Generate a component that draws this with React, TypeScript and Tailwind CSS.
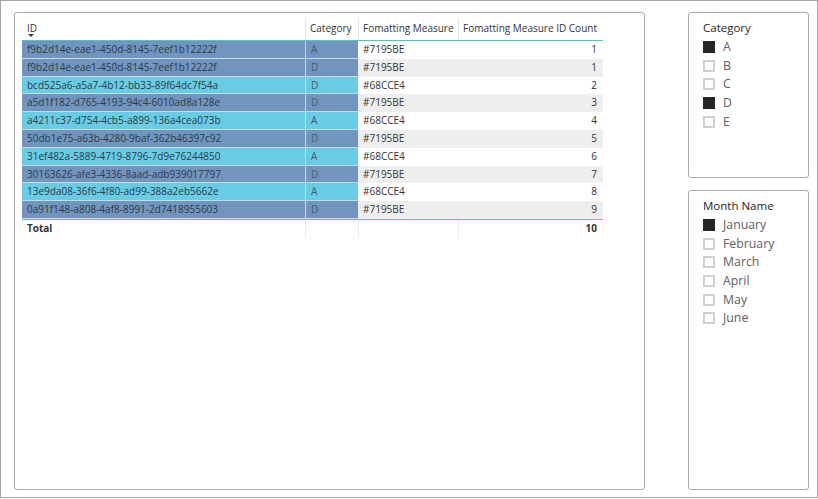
import React from 'react';

const rows = [
  { id: 'f9b2d14e-eae1-450d-8145-7eef1b12222f', cat: 'A', fm: '#7195BE', n: 1 },
  { id: 'f9b2d14e-eae1-450d-8145-7eef1b12222f', cat: 'D', fm: '#7195BE', n: 1 },
  { id: 'bcd525a6-a5a7-4b12-bb33-89f64dc7f54a', cat: 'D', fm: '#68CCE4', n: 2 },
  { id: 'a5d1f182-d765-4193-94c4-6010ad8a128e', cat: 'D', fm: '#7195BE', n: 3 },
  { id: 'a4211c37-d754-4cb5-a899-136a4cea073b', cat: 'A', fm: '#68CCE4', n: 4 },
  { id: '50db1e75-a63b-4280-9baf-362b46397c92', cat: 'D', fm: '#7195BE', n: 5 },
  { id: '31ef482a-5889-4719-8796-7d9e76244850', cat: 'A', fm: '#68CCE4', n: 6 },
  { id: '30163626-afe3-4336-8aad-adb939017797', cat: 'D', fm: '#7195BE', n: 7 },
  { id: '13e9da08-36f6-4f80-ad99-388a2eb5662e', cat: 'A', fm: '#68CCE4', n: 8 },
  { id: '0a91f148-a808-4af8-8991-2d7418955603', cat: 'D', fm: '#7195BE', n: 9 },
];

const font = { fontFamily: '"Open Sans", "Noto Sans", sans-serif' };

const Check = ({ on }: { on: boolean }) =>
  on ? (
    <span className="w-[12px] h-[12px] bg-[#252525] shrink-0" />
  ) : (
    <span className="w-[12px] h-[12px] border-2 border-[#d0d0d0] bg-white shrink-0" />
  );

const Slicer = ({ title, items, selected, h }: { title: string; items: string[]; selected: string[]; h: string }) => (
  <div className={`w-[121px] ${h} border border-[#a8a8a8] rounded-[3px] bg-white pl-[14px] pt-[7px]`}>
    <div className="text-[11.5px] text-[#252423] leading-[16px]">{title}</div>
    <div className="flex flex-col mt-[2px]">
      {items.map((it) => (
        <div key={it} className="flex items-center gap-[8px] h-[18.6px]">
          <Check on={selected.includes(it)} />
          <span className="text-[12.3px] text-[#605e5c] leading-none">{it}</span>
        </div>
      ))}
    </div>
  </div>
);

export default function App() {
  return (
    <div style={font} className="w-[818px] h-[498px] border border-[#a6a6a6] bg-white flex pl-[13px] pt-[11px] gap-[43px]">
      {/* table visual */}
      <div className="w-[631px] h-[478px] border border-[#a8a8a8] rounded-[3px] pl-[7px] pt-[5px]">
        <div className="w-[581px] text-[#333333]">
          <div className="flex h-[23px] border-b border-[#56c2c3] text-[10px]">
            <div className="w-[284px] border-r border-[#e4e4e4] pl-[5px] pt-[3px] leading-[14px] relative">
              ID
              <span className="absolute left-[6px] top-[16px] w-0 h-0 border-l-[3px] border-r-[3px] border-t-[3px] border-l-transparent border-r-transparent border-t-[#333]" />
            </div>
            <div className="w-[53px] border-r border-[#e4e4e4] pl-[4px] pt-[3px] leading-[14px]">Category</div>
            <div className="w-[100px] border-r border-[#e4e4e4] pl-[4px] pt-[3px] leading-[14px] whitespace-nowrap">Fomatting Measure</div>
            <div className="w-[144px] pl-[4px] pt-[3px] leading-[14px] whitespace-nowrap">Fomatting Measure ID Count</div>
          </div>
          {rows.map((r, i) => {
            const bg = r.fm === '#7195BE' ? 'bg-[#7195be]' : 'bg-[#68cce4]';
            const alt = i % 2 === 1 ? 'bg-[#eeeeee]' : 'bg-white';
            return (
              <div key={i} className="flex h-[17.8px] text-[10px] leading-[17px]">
                <div className={`w-[284px] ${bg} border-r border-b border-[#c9dbe6] pl-[5px] text-[#2f3a45] whitespace-nowrap`}>{r.id}</div>
                <div className={`w-[52px] ${bg} border-b border-[#c9dbe6] pl-[5px] text-[#4a5866]`}>{r.cat}</div>
                <div className={`w-[100px] ${alt} pl-[5px]`}>{r.fm}</div>
                <div className={`w-[145px] ${alt} pr-[6px] text-right`}>{r.n}</div>
              </div>
            );
          })}
          <div className="flex h-[19px] border-t border-[#56c2c3] text-[10px] font-bold leading-[17px]">
            <div className="w-[284px] border-r border-[#ececec] pl-[5px]">Total</div>
            <div className="w-[53px] border-r border-[#ececec]" />
            <div className="w-[100px] border-r border-[#ececec]" />
            <div className="w-[144px] pr-[6px] text-right">10</div>
          </div>
        </div>
      </div>
      {/* slicers */}
      <div className="flex flex-col gap-[12px]">
        <Slicer title="Category" items={['A', 'B', 'C', 'D', 'E']} selected={['A', 'D']} h="h-[166px]" />
        <Slicer
          title="Month Name"
          items={['January', 'February', 'March', 'April', 'May', 'June']}
          selected={['January']}
          h="h-[300px]"
        />
      </div>
    </div>
  );
}
